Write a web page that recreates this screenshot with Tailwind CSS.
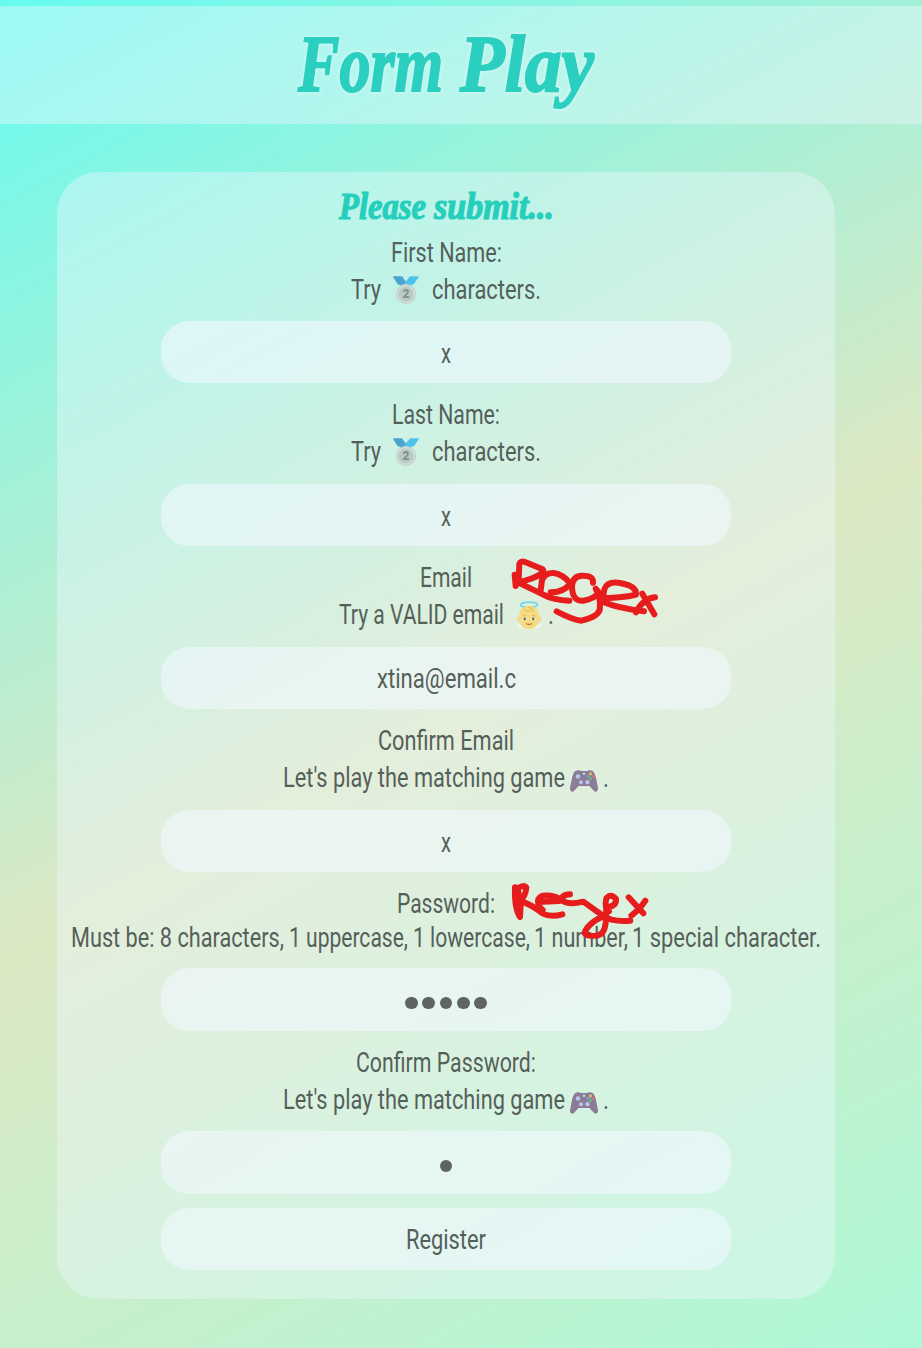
<!DOCTYPE html>
<html lang="en">
<head>
<meta charset="utf-8">
<title>Form Play</title>
<script src="https://cdn.jsdelivr.net/npm/@tailwindcss/browser@4"></script>
</head>
<body class="relative h-[1348px] w-[922px] overflow-hidden bg-[linear-gradient(151.5deg,#66fbef_0%,#dce8c4_51.8%,#aef8d6_100%)] pt-[6px] font-[Roboto,sans-serif] text-[28.5px] text-[#555f5a]">
<svg class="hidden">
  <defs>
    <symbol id="medal" viewBox="0 0 26 28">
      <path d="M0 1Q0 .3 1 .3H9L14 7 8 9.500 4.500 8Z" fill="#4ba3d0"/>
      <path d="M17 .3H25Q26 .3 25.600 1.200L21 8 17 9.500 11.500 7Z" fill="#4fc3ea"/>
      <circle cx="13" cy="18" r="10" fill="#c0cdc9"/>
      <circle cx="13" cy="18" r="9" fill="#d3dfdb"/>
      <circle cx="13" cy="18" r="7.500" fill="#b9c9c4"/>
      <text x="13" y="22.300" text-anchor="middle" font-size="12" font-weight="900" fill="#81928e">2</text>
    </symbol>
    <symbol id="pad" viewBox="0 0 28 24">
      <path d="M7 1.500Q9 .8 11 2H17Q19 .8 21 1.500C24 2 25 5 26 9L28 19C28.300 22 26 24 24 22L19.500 17H8.500L4 22C2 24-.3 22 0 19L2 9C3 5 4 2 7 1.500Z" fill="#8b7c98"/>
      <circle cx="8" cy="7.500" r="2.200" fill="#b9c7ea"/>
      <circle cx="11" cy="13.200" r="2" fill="#b9c7ea"/><circle cx="17.500" cy="13.200" r="2.100" fill="#b9c7ea"/>
      <circle cx="14" cy="4.800" r="1.200" fill="#c5ddd6"/>
      <circle cx="20.500" cy="5" r="1.400" fill="#f0c75c"/><circle cx="18" cy="7.300" r="1.300" fill="#56b9e5"/>
      <circle cx="23" cy="7.300" r="1.300" fill="#eb7068"/><circle cx="20.500" cy="9.700" r="1.300" fill="#6acb70"/>
    </symbol>
    <symbol id="angel" viewBox="0 0 26 29">
      <path d="M0 23Q5 22 8 28L3 27ZM26 23Q21 22 18 28L23 27Z" fill="#edf4f0"/>
      <ellipse cx="13" cy="3.800" rx="8.500" ry="2.700" fill="none" stroke="#72d8e9" stroke-width="1.800"/>
      <circle cx="3.500" cy="18" r="2.500" fill="#f2d27a"/><circle cx="22.500" cy="18" r="2.500" fill="#f2d27a"/>
      <path d="M13 5C5 5 2.500 11 3 18 3.500 25 8 28 13 28S22.500 25 23 18C23.500 11 21 5 13 5Z" fill="#f6dc7f"/>
      <path d="M8 8Q12 12 15 8.500M12 6Q18 7 17 12" fill="none" stroke="#e9c864" stroke-width="1.300"/>
      <path d="M7 15Q8.500 13.500 10 15M16 15Q17.500 13.500 19 15" fill="none" stroke="#d7a95b"/>
      <ellipse cx="8.800" cy="18" rx="2.500" ry="1.500" fill="#fff"/><ellipse cx="17.200" cy="18" rx="2.500" ry="1.500" fill="#fff"/>
      <circle cx="8.800" cy="18" r="1.400" fill="#756b5a"/><circle cx="17.200" cy="18" r="1.400" fill="#756b5a"/>
      <path d="M10 22.500Q13 24.500 16 22.500" fill="none" stroke="#b87752" stroke-width="1.300"/>
    </symbol>
  </defs>
</svg>

<header class="flex h-[118px] justify-center bg-[#f0f8ff]/40 pr-[30px]">
  <svg class="h-[118px] w-[298px] overflow-visible font-['Liberation_Serif',serif] text-[80px] font-bold italic drop-shadow-[0_0_2px_rgba(255,255,255,.6)]" fill="#2bcfbf" stroke="#2bcfbf" stroke-width="2"><text x="1" y="85" textLength="145" lengthAdjust="spacingAndGlyphs">Form</text><text x="163" y="85" textLength="134" lengthAdjust="spacingAndGlyphs">Play</text></svg>
</header>

<form class="mt-[48px] ml-[57px] flex h-[1127px] w-[778px] flex-col items-center rounded-[42px] bg-[#f0f8ff]/40">
  <svg class="h-[65px] w-[215px] overflow-visible font-['Liberation_Serif',serif] text-[37px] font-bold italic" fill="#25cfbb" stroke="#25cfbb" stroke-width="1.200"><text y="47" textLength="87" lengthAdjust="spacingAndGlyphs">Please</text><text x="95" y="47" textLength="120" lengthAdjust="spacingAndGlyphs">submit...</text></svg>

  <svg class="h-[37px] w-[111px] overflow-visible" fill="currentColor"><text y="25" textLength="111" lengthAdjust="spacingAndGlyphs">First Name:</text></svg>
  <div class="flex h-[37px]">
    <svg class="h-[37px] w-[30px] overflow-visible" fill="currentColor"><text y="25" textLength="30" lengthAdjust="spacingAndGlyphs">Try</text></svg>
    <svg class="mt-[2px] ml-[12px] h-[28px] w-[26px]"><use href="#medal"/></svg>
    <svg class="ml-[13px] h-[37px] w-[109px] overflow-visible" fill="currentColor"><text y="25" textLength="109" lengthAdjust="spacingAndGlyphs">characters.</text></svg>
  </div>
  <div class="mt-[10px] flex h-[62px] w-[570px] justify-center rounded-[28px] bg-[#f0f8ff]/60"><svg class="h-[62px] w-[10px] overflow-visible" fill="currentColor"><text y="41.500" textLength="10" lengthAdjust="spacingAndGlyphs">x</text></svg></div>

  <svg class="mt-[16px] h-[37px] w-[108px] overflow-visible" fill="currentColor"><text y="25" textLength="108" lengthAdjust="spacingAndGlyphs">Last Name:</text></svg>
  <div class="flex h-[37px]">
    <svg class="h-[37px] w-[30px] overflow-visible" fill="currentColor"><text y="25" textLength="30" lengthAdjust="spacingAndGlyphs">Try</text></svg>
    <svg class="mt-[2px] ml-[12px] h-[28px] w-[26px]"><use href="#medal"/></svg>
    <svg class="ml-[13px] h-[37px] w-[109px] overflow-visible" fill="currentColor"><text y="25" textLength="109" lengthAdjust="spacingAndGlyphs">characters.</text></svg>
  </div>
  <div class="mt-[11px] flex h-[62px] w-[570px] justify-center rounded-[28px] bg-[#f0f8ff]/60"><svg class="h-[62px] w-[10px] overflow-visible" fill="currentColor"><text y="41.500" textLength="10" lengthAdjust="spacingAndGlyphs">x</text></svg></div>

  <svg class="mt-[16px] h-[37px] w-[52px] overflow-visible" fill="currentColor"><text y="25" textLength="52" lengthAdjust="spacingAndGlyphs">Email</text></svg>
  <div class="flex h-[37px]">
    <svg class="h-[37px] w-[165px] overflow-visible" fill="currentColor"><text y="25" textLength="165" lengthAdjust="spacingAndGlyphs">Try a VALID email</text></svg>
    <svg class="mt-[2px] ml-[12px] h-[29px] w-[26px]"><use href="#angel"/></svg>
    <svg class="ml-[6px] h-[37px] w-[6px] overflow-visible" fill="currentColor"><text y="25" textLength="6" lengthAdjust="spacingAndGlyphs">.</text></svg>
  </div>
  <div class="mt-[11px] flex h-[62px] w-[570px] justify-center rounded-[28px] bg-[#f0f8ff]/60"><svg class="h-[62px] w-[139px] overflow-visible" fill="currentColor"><text y="41" textLength="139" lengthAdjust="spacingAndGlyphs">xtina@email.c</text></svg></div>

  <svg class="mt-[16px] h-[37px] w-[136px] overflow-visible" fill="currentColor"><text y="25" textLength="136" lengthAdjust="spacingAndGlyphs">Confirm Email</text></svg>
  <div class="flex h-[37px]">
    <svg class="h-[37px] w-[282px] overflow-visible" fill="currentColor"><text y="25" textLength="282" lengthAdjust="spacingAndGlyphs">Let's play the matching game</text></svg>
    <svg class="mt-[7px] ml-[5px] h-[24px] w-[28px]"><use href="#pad"/></svg>
    <svg class="ml-[5px] h-[37px] w-[6px] overflow-visible" fill="currentColor"><text y="25" textLength="6" lengthAdjust="spacingAndGlyphs">.</text></svg>
  </div>
  <div class="mt-[11px] flex h-[62px] w-[570px] justify-center rounded-[28px] bg-[#f0f8ff]/60"><svg class="h-[62px] w-[10px] overflow-visible" fill="currentColor"><text y="41.500" textLength="10" lengthAdjust="spacingAndGlyphs">x</text></svg></div>

  <svg class="mt-[16px] h-[37px] w-[98px] overflow-visible" fill="currentColor"><text y="25" textLength="98" lengthAdjust="spacingAndGlyphs">Password:</text></svg>
  <svg class="h-[34px] w-[750px] overflow-visible" fill="currentColor">
    <text y="22" textLength="213" lengthAdjust="spacingAndGlyphs">Must be: 8 characters,</text>
    <text x="218" y="22" textLength="119" lengthAdjust="spacingAndGlyphs">1 uppercase,</text>
    <text x="342" y="22" textLength="117" lengthAdjust="spacingAndGlyphs">1 lowercase,</text>
    <text x="463" y="22" textLength="94" lengthAdjust="spacingAndGlyphs">1 number,</text>
    <text x="561" y="22" textLength="189" lengthAdjust="spacingAndGlyphs">1 special character.</text>
  </svg>
  <div class="mt-[9px] flex h-[63px] w-[570px] items-center justify-center gap-[4.800px] rounded-[28px] bg-[#f0f8ff]/60 pt-[7px]">
    <i class="size-[12.500px] rounded-full bg-[#5f6461]"></i><i class="size-[12.500px] rounded-full bg-[#5f6461]"></i><i class="size-[12.500px] rounded-full bg-[#5f6461]"></i><i class="size-[12.500px] rounded-full bg-[#5f6461]"></i><i class="size-[12.500px] rounded-full bg-[#5f6461]"></i>
  </div>

  <svg class="mt-[16px] h-[37px] w-[180px] overflow-visible" fill="currentColor"><text y="25" textLength="180" lengthAdjust="spacingAndGlyphs">Confirm Password:</text></svg>
  <div class="flex h-[37px]">
    <svg class="h-[37px] w-[282px] overflow-visible" fill="currentColor"><text y="25" textLength="282" lengthAdjust="spacingAndGlyphs">Let's play the matching game</text></svg>
    <svg class="mt-[7px] ml-[5px] h-[24px] w-[28px]"><use href="#pad"/></svg>
    <svg class="ml-[5px] h-[37px] w-[6px] overflow-visible" fill="currentColor"><text y="25" textLength="6" lengthAdjust="spacingAndGlyphs">.</text></svg>
  </div>
  <div class="mt-[10px] flex h-[63px] w-[570px] items-center justify-center rounded-[28px] bg-[#f0f8ff]/60 pt-[7px]"><i class="size-[12.500px] rounded-full bg-[#5f6461]"></i></div>
  <button type="button" class="mt-[14px] flex h-[62px] w-[570px] justify-center rounded-[28px] bg-[#f0f8ff]/60"><svg class="h-[62px] w-[80px] overflow-visible" fill="currentColor"><text y="41" textLength="80" lengthAdjust="spacingAndGlyphs">Register</text></svg></button>
</form>

<!-- Handwritten notes over the form -->
<svg class="absolute top-[550px] left-[500px] h-[90px] w-[170px]" viewBox="0 0 510 270" fill="none" stroke="#e71d1d" stroke-width="18" stroke-linecap="round" stroke-linejoin="round">
  <path d="M44 74L47 108L56 90L58 42Q60 32 75 36L128 58Q134 64 126 70Q100 88 54 97L130 134Q160 151 208 152"/>
  <path d="M152 127Q190 128 211 101Q190 73 161 69Q135 68 126 90L122 122"/>
  <path d="M279 98Q281 76 246 77Q216 78 216 112Q218 155 250 152Q282 147 297 128L287 116Q304 147 299 180Q292 201 244 212Q219 210 170 184"/>
  <path d="M309 145Q375 143 408 134Q411 108 360 99Q321 93 313 118Q308 140 310 156Q352 174 432 184"/>
  <path d="M427 131L463 193M465 142Q429 146 408 187"/>
</svg>
<svg class="absolute top-[870px] left-[500px] h-[90px] w-[170px]" viewBox="0 0 510 270" fill="none" stroke="#e71d1d" stroke-width="18" stroke-linecap="round" stroke-linejoin="round">
  <path d="M45 52Q43 116 60 141L62 106L53 55Q72 43 79 52Q78 78 58 93Q83 98 114 120Q140 146 187 133"/>
  <path d="M114 95Q160 96 187 91Q160 73 127 77Q111 84 115 101Q119 114 128 120"/>
  <path d="M210 73Q181 75 188 91Q202 106 250 95L310 138Q260 163 254 189Q257 200 288 197Q314 194 317 158L319 112Q350 109 348 87Q332 68 319 85Q312 116 327 124Q298 136 334 149Q361 155 391 152"/>
  <path d="M386 82L430 130M436 92Q420 117 394 137"/>
</svg>
</body>
</html>
